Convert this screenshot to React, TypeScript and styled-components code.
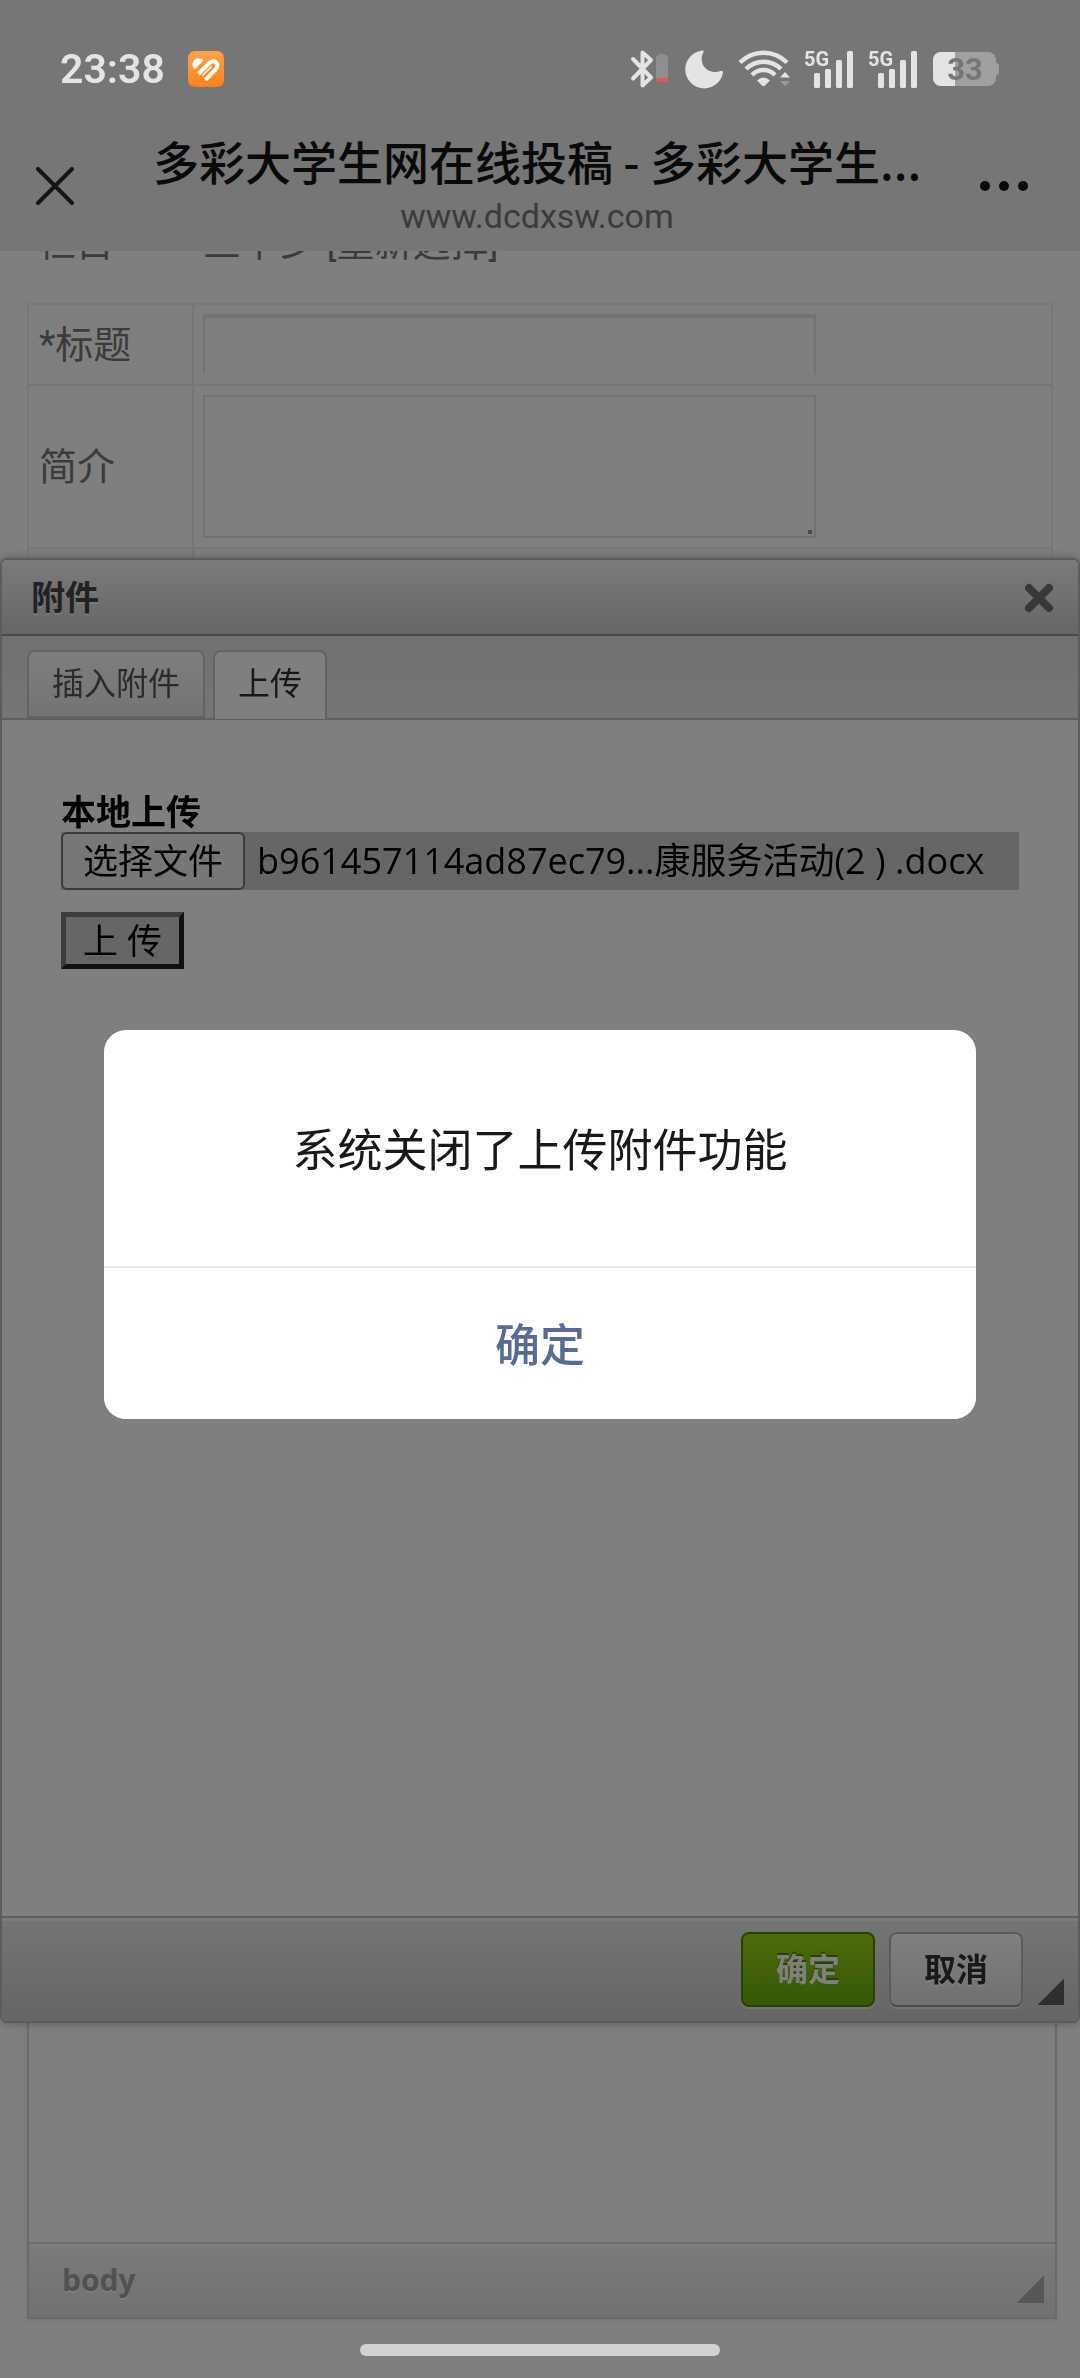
import React from "react";
import styled, { createGlobalStyle, css } from "styled-components";

const sans = `Roboto, "Noto Sans CJK SC", "Noto Sans", sans-serif`;

const GlobalStyle = createGlobalStyle`
  *, *::before, *::after { box-sizing: border-box; }
  body { margin: 0; background: #fff; font-family: ${sans}; }
  button, input, textarea { font-family: inherit; margin: 0; }
`;

const Page = styled.div`
  display: flex;
  flex-direction: column;
  min-height: 100vh;
  background: #fff;
`;

/* ---------- system status bar and browser bar ---------- */

const TopBar = styled.header`
  position: relative;
  background: #ededed;
`;

const StatusBar = styled.div`
  position: relative;
  z-index: 30;
  display: flex;
  align-items: center;
  justify-content: space-between;
  height: 120px;
  padding: 18px 81px 0 60px;
  color: #e4e4e4;
`;

const StatusGroup = styled.div<{ $gap: number }>`
  display: flex;
  align-items: center;
  gap: ${(p) => p.$gap}px;
  svg { display: block; overflow: visible; }
`;

const Clock = styled.time`
  font-size: 41px;
  line-height: 48px;
  font-weight: 600;
`;

const NavBar = styled.div`
  display: flex;
  align-items: center;
  height: 131px;
  padding: 0 36px;
`;

const IconButton = styled.button<{ $width?: number }>`
  display: flex;
  flex: none;
  align-items: center;
  justify-content: flex-start;
  width: ${(p) => (p.$width ? `${p.$width}px` : "auto")};
  padding: 0;
  border: 0;
  background: none;
  cursor: pointer;
`;

const Heading = styled.div`
  flex: 1;
  min-width: 0;
  display: flex;
  flex-direction: column;
  align-items: center;
  gap: 4px;
`;

const PageTitle = styled.h1`
  margin: 0;
  font-family: "Noto Sans CJK SC", sans-serif;
  font-size: 46px;
  line-height: 56px;
  font-weight: 500;
  color: #141414;
  white-space: nowrap;
`;

const PageUrl = styled.span`
  font-size: 34px;
  line-height: 48px;
  color: #767676;
`;

/* ---------- web page under the dialog ---------- */

const Content = styled.main`
  flex: 1;
  display: flex;
  flex-direction: column;
  overflow: hidden;
  padding-bottom: 59px;
  color: #777;
  font-size: 38px;
`;

const CategoryRow = styled.div`
  display: grid;
  grid-template-columns: 165px 1fr;
  margin: -36px 27px 32px;
  padding-left: 11px;
  line-height: 56px;
`;

const Form = styled.form`
  margin: 0 27px;
  border: 2px solid #edf0f2;
  border-bottom: 0;
`;

const FormRow = styled.div`
  display: grid;
  grid-template-columns: 165px 1fr;
  border-bottom: 2px solid #e8edf0;
`;

const FieldLabel = styled.label`
  display: flex;
  align-items: center;
  padding: 0 0 6px 10px;
  border-right: 2px solid #e8edf0;
`;

const FieldCell = styled.div`
  padding: 9px;
  display: flex;
`;

const fieldBase = css`
  width: 613px;
  max-width: 100%;
  padding: 8px;
  background: #fff;
  font-size: 32px;
  outline: 0;
`;

const TextInput = styled.input`
  ${fieldBase}
  height: 61px;
  border: 2px solid #e6e6e6;
  border-bottom-color: #fafafa;
  box-shadow: inset 0 2px 2px #e6e6e6;
`;

const TextArea = styled.textarea`
  ${fieldBase}
  height: 143px;
  border: 2px solid #e4e4e4;
  resize: none;
`;

const TextAreaWrap = styled.div`
  position: relative;
  display: flex;
  max-width: 100%;
  &::after {
    content: "";
    position: absolute;
    right: 4px;
    bottom: 4px;
    width: 4px;
    height: 4px;
    background: #999;
  }
`;

const Editor = styled.section`
  flex: 1;
  display: flex;
  flex-direction: column;
  margin: 20px 23px 0 27px;
  border: 2px solid #d5d5d5;
  box-shadow: 0 2px 4px rgba(0, 0, 0, 0.08);
`;

const EditorBody = styled.div`
  flex: 1;
  background: #fff;
`;

const EditorFooter = styled.div`
  display: flex;
  align-items: center;
  justify-content: space-between;
  height: 75px;
  padding: 0 11px 0 33px;
  border-top: 2px solid #d8d8d8;
  background: linear-gradient(#f5f5f5, #e3e3e3);
  box-shadow: inset 0 3px 0 #fcfcfc;
`;

const PathLink = styled.a`
  padding-bottom: 2px;
  font-family: "Open Sans", "Noto Sans", sans-serif;
  font-size: 30px;
  line-height: 40px;
  font-weight: 700;
  color: #a2a2a2;
  text-decoration: none;
  text-shadow: 0 2px 0 #fafafa;
`;

const Grip = styled.span<{ $color: string }>`
  flex: none;
  align-self: flex-end;
  width: 27px;
  height: 27px;
  margin-bottom: 14px;
  background: linear-gradient(135deg, transparent 50%, ${(p) => p.$color} 50%);
`;

/* ---------- attachment dialog ---------- */

const Dialog = styled.section`
  position: fixed;
  z-index: 10;
  top: 558px;
  bottom: 355px;
  left: 0;
  right: 0;
  display: flex;
  flex-direction: column;
  overflow: hidden;
  border: 2px solid #b9b9b9;
  border-radius: 7px;
  background: #fff;
  box-shadow: 0 0 10px rgba(0, 0, 0, 0.3);
`;

const DialogHead = styled.header`
  display: flex;
  align-items: center;
  justify-content: space-between;
  height: 76px;
  padding: 2px 24px 0 29px;
  border-bottom: 2px solid #939393;
  background: linear-gradient(#f6f6f6, #cdcdcd);
`;

const DialogTitle = styled.h2`
  margin: 0;
  font-size: 34px;
  line-height: 48px;
  font-weight: 700;
  color: #444;
  text-shadow: 0 2px 0 #f2f2f2;
`;

const TabStrip = styled.div`
  display: flex;
  align-items: flex-end;
  gap: 8px;
  height: 84px;
  padding: 0 25px;
  border-bottom: 2px solid #bfbfbf;
  background: linear-gradient(#e2e2e2, #ebebeb);
`;

const Tab = styled.button<{ $active?: boolean }>`
  height: ${(p) => (p.$active ? 69 : 68)}px;
  padding: 0 23px ${(p) => (p.$active ? 4 : 1)}px;
  border: 2px solid #c6c6c6;
  border-bottom-width: ${(p) => (p.$active ? 0 : 2)}px;
  border-radius: 8px 8px 0 0;
  background: ${(p) => (p.$active ? "#fff" : "linear-gradient(#fcfcfc, #e8e8e8)")};
  margin-bottom: ${(p) => (p.$active ? -1 : 0)}px;
  font-size: 32px;
  line-height: 40px;
  color: ${(p) => (p.$active ? "#303030" : "#565656")};
  cursor: pointer;
`;

const DialogBody = styled.div`
  flex: 1;
  display: flex;
  flex-direction: column;
  align-items: flex-start;
  padding: 72px 59px 0;
  color: #000;
  font-family: "Open Sans", "Noto Sans CJK SC", sans-serif;
  font-size: 35px;
`;

const UploadLabel = styled.strong`
  font-weight: 700;
  line-height: 40px;
`;

const FilePicker = styled.div`
  align-self: stretch;
  display: flex;
  align-items: center;
  gap: 12px;
  height: 58px;
  background: #ccc;
  line-height: 46px;
  white-space: nowrap;
`;

const HiddenFile = styled.input`
  position: absolute;
  width: 1px;
  height: 1px;
  overflow: hidden;
  clip-path: inset(50%);
`;

const FileButton = styled.label`
  height: 58px;
  padding: 4px 20px 0;
  border: 2px solid #767676;
  border-radius: 6px;
  background: #efefef;
  cursor: pointer;
`;

const FileName = styled.span`
  font-size: 36px;
`;

const UploadButton = styled.button`
  height: 57px;
  margin-top: 22px;
  padding: 0 17px;
  border: 5px solid;
  border-color: #7a7a7a #222 #222 #7a7a7a;
  background: #ccc;
  color: #000;
  font-size: 35px;
  line-height: 46px;
  cursor: pointer;
`;

const DialogFoot = styled.footer`
  display: flex;
  align-items: center;
  justify-content: flex-end;
  gap: 14px;
  height: 105px;
  padding-right: 14px;
  border-top: 2px solid #bababa;
  background: linear-gradient(#eaeaea, #cbcbcb);
  box-shadow: inset 0 3px 0 #f6f6f6;
`;

const FootButton = styled.button<{ $primary?: boolean }>`
  width: 134px;
  height: 75px;
  padding: 0;
  border: 2px solid #b6b6b6;
  border-bottom-color: #999;
  border-radius: 8px;
  background: linear-gradient(#fff, #e2e2e2);
  box-shadow: 0 2px 0 #e8e8e8;
  font-size: 32px;
  line-height: 40px;
  font-weight: 700;
  color: #333;
  text-shadow: 0 2px 0 #fff;
  cursor: pointer;
  ${(p) =>
    p.$primary &&
    css`
      border-color: #55830c;
      background: linear-gradient(#9ad717, #69b10b);
      color: #fff;
      text-shadow: 0 -2px 0 #55830c;
    `}
`;

const FootGrip = styled(Grip)`
  margin-bottom: 16px;
`;

/* ---------- system alert ---------- */

const Overlay = styled.div`
  position: fixed;
  inset: 0;
  z-index: 20;
  display: flex;
  align-items: center;
  padding: 71px 104px 0;
  background: rgba(0, 0, 0, 0.5);
`;

const Alert = styled.div`
  flex: 1;
  overflow: hidden;
  border-radius: 22px;
  background: #fff;
  text-align: center;
  font-size: 45px;
  line-height: 60px;
`;

const AlertMessage = styled.p`
  margin: 0;
  padding: 92px 48px 84px;
  color: #191919;
`;

const AlertButton = styled.button`
  display: block;
  width: 100%;
  padding: 49px 0 42px;
  border: 0;
  border-top: 2px solid #e5e5e5;
  background: #fff;
  color: #576b95;
  font-size: 45px;
  line-height: 60px;
  font-weight: 500;
  cursor: pointer;
`;

const HomeIndicator = styled.div`
  position: fixed;
  z-index: 30;
  bottom: 22px;
  left: 50%;
  width: 360px;
  height: 12px;
  margin-left: -180px;
  border-radius: 6px;
  background: #d2d2d2;
`;

/* ---------- icons ---------- */

const HealthIcon = () => (
  <svg width="36" height="36" viewBox="0 0 36 36" aria-hidden="true">
    <defs>
      <linearGradient id="health" x1="0" y1="0" x2="0" y2="1">
        <stop offset="0" stopColor="#ffa24c" />
        <stop offset="1" stopColor="#ff8319" />
      </linearGradient>
    </defs>
    <rect width="36" height="36" rx="7" fill="url(#health)" />
    <path d="M6.500 18.500C2.500 13 5 7.500 10.500 7.200Q13.500 7.200 15.800 9.200Z" fill="#fff" />
    <path d="M10.500 22.800L21.300 12C23.500 9.600 26.700 9.600 28.300 11.600C30 13.800 29.500 16.700 27.500 18.700L17.500 28.800" fill="none" stroke="#fff" strokeWidth="4" />
    <path d="M14.500 24.500L23.500 15.500" stroke="#fff" strokeWidth="1.500" />
  </svg>
);

const BluetoothIcon = () => (
  <svg width="37" height="38" viewBox="0 0 37 38" aria-hidden="true">
    <path d="M2 9L20 27.500L11.500 35.500V2.500L20 10L2 28.500" fill="none" stroke="#e4e4e4" strokeWidth="4" strokeLinejoin="round" strokeLinecap="round" />
    <path d="M25 8a3 3 0 0 1 3-3q0-1 1.500-1h3q1.500 0 1.500 1a3 3 0 0 1 3 3v21h-12z" fill="#8f8f8f" />
    <path d="M25 28h12v2a2 2 0 0 1-2 2h-8a2 2 0 0 1-2-2z" fill="#e0584e" />
  </svg>
);

const MoonIcon = () => (
  <svg width="42" height="38" viewBox="0 0 42 38" aria-hidden="true">
    <path d="M20.500 0.500A19 19 0 1 0 41 22.500Q41 20 38.500 21C27 25.500 15 14.500 21.500 2Q22.300 0 20.500 0.500Z" fill="#e4e4e4" />
  </svg>
);

const WifiIcon = () => (
  <svg width="53" height="38" viewBox="0 0 53 38" aria-hidden="true">
    <g fill="none" stroke="#e4e4e4" strokeWidth="4.500">
      <path d="M2 12.500A33 33 0 0 1 49 12.500" />
      <path d="M8 19A24.500 24.500 0 0 1 43 19" />
      <path d="M14 25A16 16 0 0 1 37 25" />
    </g>
    <path d="M19 30.500Q25.500 24.500 32 30.500L27 35.500Q25.500 37 24 35.500Z" fill="#e4e4e4" />
    <path d="M42 27.500L47 22L52 27.500Z" fill="#e4e4e4" />
    <path d="M42 31L47 36.500L52 31Z" fill="#999" />
  </svg>
);

const SignalIcon = () => (
  <svg width="50" height="38" viewBox="0 0 50 38" role="img" aria-label="5G">
    <text x="-1" y="16" fill="#e4e4e4" fontFamily="'Liberation Sans Narrow', Roboto, sans-serif" fontSize="20" fontWeight="700">5G</text>
    <g fill="#e4e4e4">
      <rect x="9" y="23" width="6" height="15" rx="1.500" />
      <rect x="20" y="19" width="6" height="19" rx="1.500" />
      <rect x="31" y="10" width="6" height="28" rx="1.500" />
      <rect x="42" y="1" width="6" height="37" rx="1.500" />
    </g>
  </svg>
);

const BatteryIcon = () => (
  <svg width="66" height="34" viewBox="0 0 66 34" role="img" aria-label="33%">
    <defs>
      <clipPath id="cell"><rect width="63" height="34" rx="8" /></clipPath>
    </defs>
    <g clipPath="url(#cell)">
      <rect width="63" height="34" fill="#a0a0a0" />
      <rect width="22" height="34" fill="#e4e4e4" />
    </g>
    <path d="M63 11q3 0 3 3v6q0 3-3 3z" fill="#a0a0a0" />
    <text x="32" y="28" textAnchor="middle" fill="#767676" fontFamily="Roboto, sans-serif" fontSize="31" fontWeight="700">33</text>
  </svg>
);

function PhoneStatus() {
  return (
    <StatusBar>
      <StatusGroup $gap={23}>
        <Clock>23:38</Clock>
        <HealthIcon />
      </StatusGroup>
      <StatusGroup $gap={14}>
        <BluetoothIcon />
        <MoonIcon />
        <WifiIcon />
        <SignalIcon />
        <SignalIcon />
        <BatteryIcon />
      </StatusGroup>
    </StatusBar>
  );
}

function BrowserBar() {
  return (
    <NavBar>
      <IconButton type="button" aria-label="close page" $width={58}>
        <svg width="38" height="38" viewBox="0 0 38 38">
          <path d="M2 2L36 36M36 2L2 36" stroke="#2a2a2a" strokeWidth="4" strokeLinecap="round" />
        </svg>
      </IconButton>
      <Heading>
        <PageTitle>多彩大学生网在线投稿 - 多彩大学生...</PageTitle>
        <PageUrl>www.dcdxsw.com</PageUrl>
      </Heading>
      <IconButton type="button" aria-label="more" $width={64}>
        <svg width="48" height="12" viewBox="0 0 48 12" fill="#141414">
          <circle cx="5" cy="6" r="5" />
          <circle cx="24" cy="6" r="5" />
          <circle cx="43" cy="6" r="5" />
        </svg>
      </IconButton>
    </NavBar>
  );
}

function SubmissionForm() {
  return (
    <Form>
      <FormRow>
        <FieldLabel htmlFor="title">*标题</FieldLabel>
        <FieldCell><TextInput id="title" type="text" /></FieldCell>
      </FormRow>
      <FormRow>
        <FieldLabel htmlFor="summary">简介</FieldLabel>
        <FieldCell>
          <TextAreaWrap><TextArea id="summary" /></TextAreaWrap>
        </FieldCell>
      </FormRow>
      <FormRow>
        <FieldLabel htmlFor="extra" />
        <FieldCell><TextInput id="extra" type="text" /></FieldCell>
      </FormRow>
    </Form>
  );
}

function AttachmentDialog() {
  return (
    <Dialog role="dialog" aria-labelledby="dialog-title">
      <DialogHead>
        <DialogTitle id="dialog-title">附件</DialogTitle>
        <IconButton type="button" aria-label="close">
          <svg width="30" height="30" viewBox="0 0 30 30">
            <path d="M5 5L25 25M25 5L5 25" stroke="#717171" strokeWidth="8" strokeLinecap="round" />
          </svg>
        </IconButton>
      </DialogHead>
      <TabStrip role="tablist">
        <Tab type="button" role="tab">插入附件</Tab>
        <Tab type="button" role="tab" aria-selected="true" $active>上传</Tab>
      </TabStrip>
      <DialogBody>
        <UploadLabel>本地上传</UploadLabel>
        <FilePicker>
          <HiddenFile id="file" type="file" />
          <FileButton htmlFor="file">选择文件</FileButton>
          <FileName>b961457114ad87ec79...康服务活动(2 ) .docx</FileName>
        </FilePicker>
        <UploadButton type="button">上 传</UploadButton>
      </DialogBody>
      <DialogFoot>
        <FootButton type="button" $primary>确定</FootButton>
        <FootButton type="button">取消</FootButton>
        <FootGrip $color="#5e5e5e" />
      </DialogFoot>
    </Dialog>
  );
}

export default function App() {
  return (
    <>
      <GlobalStyle />
      <Page>
        <TopBar>
          <PhoneStatus />
          <BrowserBar />
        </TopBar>
        <Content>
          <CategoryRow>
            <span>栏目</span>
            <span>三下乡 [重新选择]</span>
          </CategoryRow>
          <SubmissionForm />
          <Editor>
            <EditorBody />
            <EditorFooter>
              <PathLink href="#body">body</PathLink>
              <Grip $color="#afafaf" />
            </EditorFooter>
          </Editor>
        </Content>
      </Page>
      <AttachmentDialog />
      <Overlay>
        <Alert role="alertdialog" aria-describedby="alert-message">
          <AlertMessage id="alert-message">系统关闭了上传附件功能</AlertMessage>
          <AlertButton type="button">确定</AlertButton>
        </Alert>
      </Overlay>
      <HomeIndicator />
    </>
  );
}
